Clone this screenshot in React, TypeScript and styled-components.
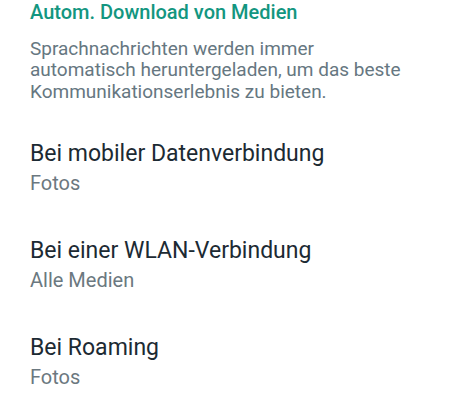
import React from 'react';
import styled, { createGlobalStyle } from 'styled-components';

const GlobalStyle = createGlobalStyle`
  body {
    margin: 0;
    background: #ffffff;
    font-family: Roboto, "Noto Sans", sans-serif;
  }
`;

const Screen = styled.div`
  display: flex;
  flex-direction: column;
  width: 450px;
  height: 407px;
  overflow: hidden;
  background: #ffffff;
`;

const Section = styled.section`
  display: flex;
  flex-direction: column;
  padding: 0 30px;
`;

const SectionTitle = styled.h2`
  margin: 0;
  font-size: 20px;
  line-height: 24px;
  font-weight: 500;
  color: #139680;
`;

const Description = styled.p`
  margin: 13.75px 0 0 0;
  font-size: 19px;
  line-height: 21.5px;
  font-weight: 400;
  color: #667781;
`;

const OptionList = styled.div`
  display: flex;
  flex-direction: column;
  margin-top: 17.75px;
`;

const OptionRow = styled.div`
  display: flex;
  flex-direction: column;
  padding: 20px 30px 0 30px;
  height: 97px;
  box-sizing: border-box;
`;

const OptionTitle = styled.div`
  font-size: 23px;
  line-height: 28px;
  color: #1c2a33;
`;

const OptionValue = styled.div`
  margin-top: 2.5px;
  font-size: 20px;
  line-height: 24px;
  color: #6b7880;
`;

const options = [
  { title: 'Bei mobiler Datenverbindung', value: 'Fotos' },
  { title: 'Bei einer WLAN-Verbindung', value: 'Alle Medien' },
  { title: 'Bei Roaming', value: 'Fotos' },
];

export default function App() {
  return (
    <>
      <GlobalStyle />
      <Screen>
        <Section>
          <SectionTitle>Autom. Download von Medien</SectionTitle>
          <Description>
            Sprachnachrichten werden immer automatisch heruntergeladen, um das beste
            Kommunikationserlebnis zu bieten.
          </Description>
        </Section>
        <OptionList>
          {options.map((o) => (
            <OptionRow key={o.title}>
              <OptionTitle>{o.title}</OptionTitle>
              <OptionValue>{o.value}</OptionValue>
            </OptionRow>
          ))}
        </OptionList>
      </Screen>
    </>
  );
}
